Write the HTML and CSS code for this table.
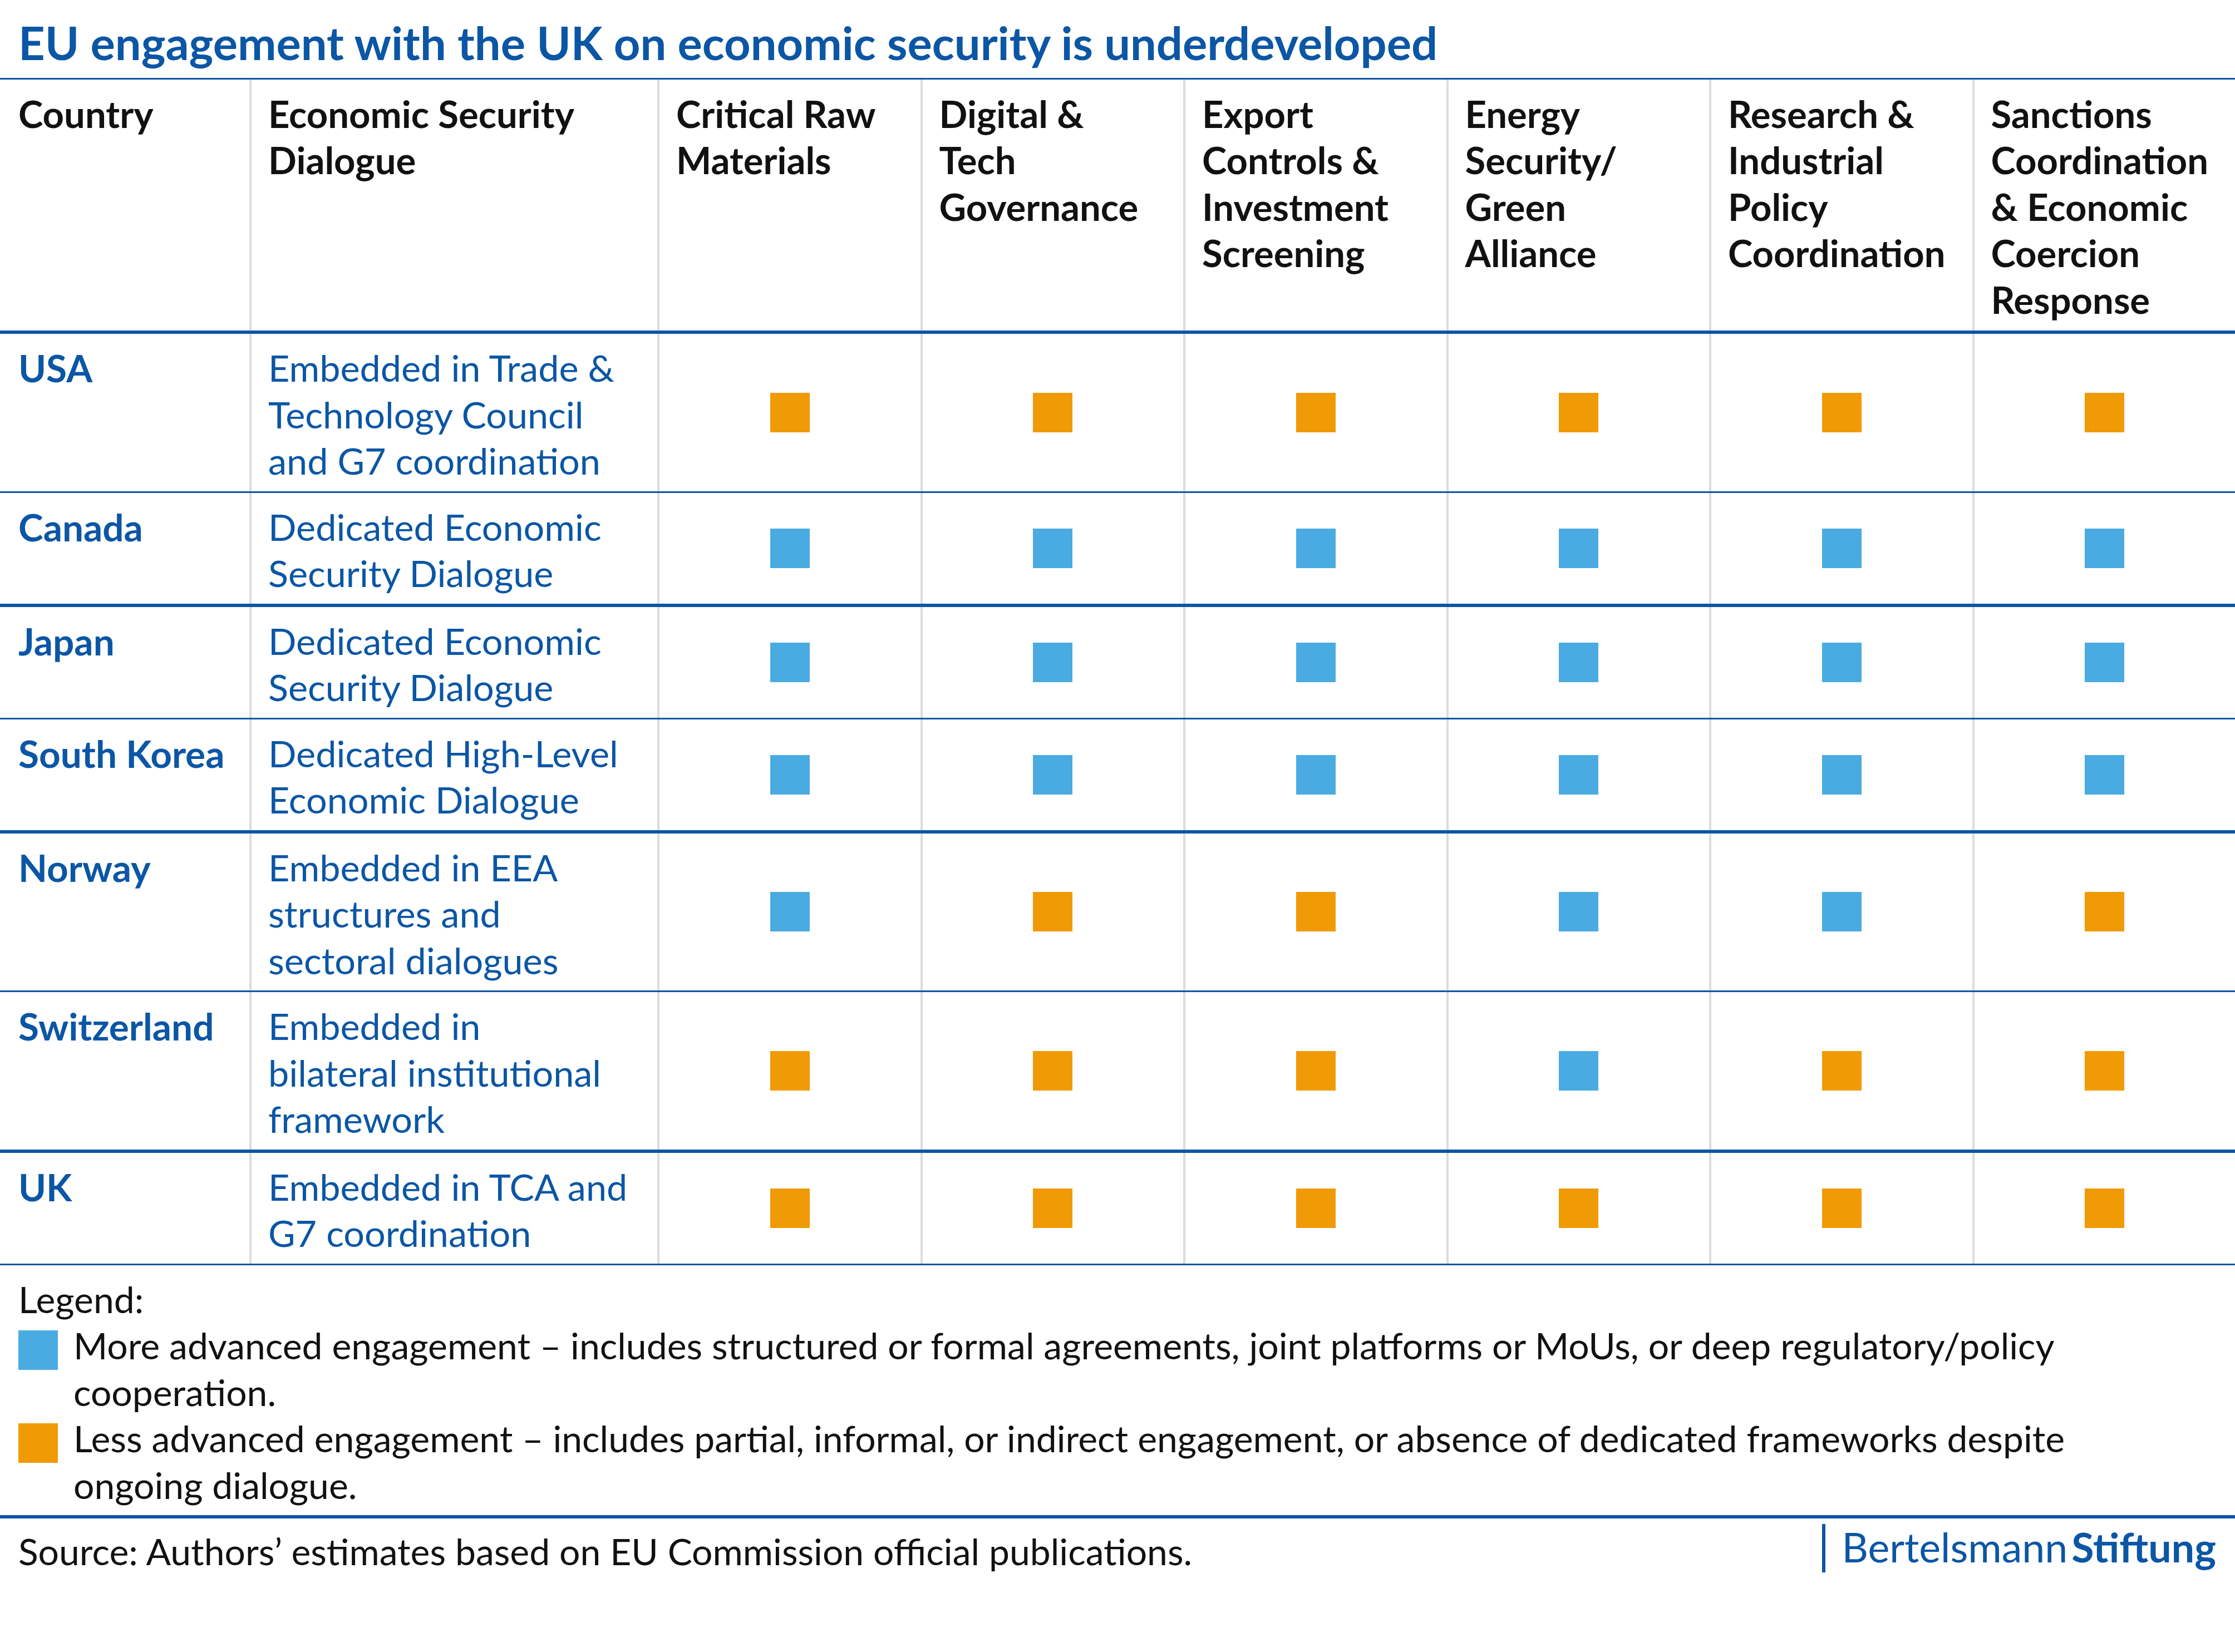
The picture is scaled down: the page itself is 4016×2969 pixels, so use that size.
FILE: index.html
```html
<!DOCTYPE html>
<html lang="en">
<head>
<meta charset="utf-8">
<title>EU engagement with the UK on economic security is underdeveloped</title>
<link rel="stylesheet" href="styles.css">
</head>
<body>
<div class="page">
  <h1 class="title">EU engagement with the UK on economic security is underdeveloped</h1>

  <div class="table">
    <div class="row head thick">
      <div class="cell first">Country</div>
      <div class="cell">Economic Security<br>Dialogue</div>
      <div class="cell">Critical Raw<br>Materials</div>
      <div class="cell">Digital &amp;<br>Tech<br>Governance</div>
      <div class="cell">Export<br>Controls &amp;<br>Investment<br>Screening</div>
      <div class="cell">Energy<br>Security/<br>Green<br>Alliance</div>
      <div class="cell">Research &amp;<br>Industrial<br>Policy<br>Coordination</div>
      <div class="cell">Sanctions<br>Coordination<br>&amp; Economic<br>Coercion<br>Response</div>
    </div>

    <div class="row">
      <div class="cell first country">USA</div>
      <div class="cell dialogue">Embedded in Trade &amp;<br>Technology Council<br>and G7 coordination</div>
      <div class="cell mark"><span class="sq less"></span></div>
      <div class="cell mark"><span class="sq less"></span></div>
      <div class="cell mark"><span class="sq less"></span></div>
      <div class="cell mark"><span class="sq less"></span></div>
      <div class="cell mark"><span class="sq less"></span></div>
      <div class="cell mark"><span class="sq less"></span></div>
    </div>

    <div class="row thick">
      <div class="cell first country">Canada</div>
      <div class="cell dialogue">Dedicated Economic<br>Security Dialogue</div>
      <div class="cell mark"><span class="sq more"></span></div>
      <div class="cell mark"><span class="sq more"></span></div>
      <div class="cell mark"><span class="sq more"></span></div>
      <div class="cell mark"><span class="sq more"></span></div>
      <div class="cell mark"><span class="sq more"></span></div>
      <div class="cell mark"><span class="sq more"></span></div>
    </div>

    <div class="row">
      <div class="cell first country">Japan</div>
      <div class="cell dialogue">Dedicated Economic<br>Security Dialogue</div>
      <div class="cell mark"><span class="sq more"></span></div>
      <div class="cell mark"><span class="sq more"></span></div>
      <div class="cell mark"><span class="sq more"></span></div>
      <div class="cell mark"><span class="sq more"></span></div>
      <div class="cell mark"><span class="sq more"></span></div>
      <div class="cell mark"><span class="sq more"></span></div>
    </div>

    <div class="row thick">
      <div class="cell first country">South Korea</div>
      <div class="cell dialogue">Dedicated High-Level<br>Economic Dialogue</div>
      <div class="cell mark"><span class="sq more"></span></div>
      <div class="cell mark"><span class="sq more"></span></div>
      <div class="cell mark"><span class="sq more"></span></div>
      <div class="cell mark"><span class="sq more"></span></div>
      <div class="cell mark"><span class="sq more"></span></div>
      <div class="cell mark"><span class="sq more"></span></div>
    </div>

    <div class="row">
      <div class="cell first country">Norway</div>
      <div class="cell dialogue">Embedded in EEA<br>structures and<br>sectoral dialogues</div>
      <div class="cell mark"><span class="sq more"></span></div>
      <div class="cell mark"><span class="sq less"></span></div>
      <div class="cell mark"><span class="sq less"></span></div>
      <div class="cell mark"><span class="sq more"></span></div>
      <div class="cell mark"><span class="sq more"></span></div>
      <div class="cell mark"><span class="sq less"></span></div>
    </div>

    <div class="row thick">
      <div class="cell first country">Switzerland</div>
      <div class="cell dialogue">Embedded in<br>bilateral institutional<br>framework</div>
      <div class="cell mark"><span class="sq less"></span></div>
      <div class="cell mark"><span class="sq less"></span></div>
      <div class="cell mark"><span class="sq less"></span></div>
      <div class="cell mark"><span class="sq more"></span></div>
      <div class="cell mark"><span class="sq less"></span></div>
      <div class="cell mark"><span class="sq less"></span></div>
    </div>

    <div class="row">
      <div class="cell first country">UK</div>
      <div class="cell dialogue">Embedded in TCA and<br>G7 coordination</div>
      <div class="cell mark"><span class="sq less"></span></div>
      <div class="cell mark"><span class="sq less"></span></div>
      <div class="cell mark"><span class="sq less"></span></div>
      <div class="cell mark"><span class="sq less"></span></div>
      <div class="cell mark"><span class="sq less"></span></div>
      <div class="cell mark"><span class="sq less"></span></div>
    </div>
  </div>

  <div class="legend">
    <div class="legend-title">Legend:</div>
    <div class="legend-item">
      <span class="sq more"></span>
      <span class="legend-text">More advanced engagement – includes structured or formal agreements, joint platforms or MoUs, or deep regulatory/policy<br>cooperation.</span>
    </div>
    <div class="legend-item">
      <span class="sq less"></span>
      <span class="legend-text">Less advanced engagement – includes partial, informal, or indirect engagement, or absence of dedicated frameworks despite<br>ongoing dialogue.</span>
    </div>
  </div>

  <div class="footer">
    <div class="source">Source: Authors’ estimates based on EU Commission official publications.</div>
    <div class="logo">
      <span class="logo-bar"></span>
      <span class="logo-text">Bertelsmann<span class="logo-bold">Stiftung</span></span>
    </div>
  </div>
</div>
</body>
</html>
```

FILE: styles.css
```css
html, body {
  margin: 0;
  padding: 0;
  background: #ffffff;
}

body {
  font-family: Lato, "Noto Sans", "Liberation Sans", sans-serif;
  color: #111111;
}

.page {
  width: 4016px;
  min-height: 2969px;
}

.title {
  margin: 0;
  padding: 27px 33px 13px 33px;
  font-size: 83px;
  line-height: 1.2;
  font-weight: 700;
  color: #0b56a5;
  border-bottom: 3px solid #0b56a5;
}

.table {
  display: flex;
  flex-direction: column;
}

.row {
  display: grid;
  grid-template-columns: 448px 733px repeat(6, 1fr);
  border-bottom: 3px solid #0b56a5;
  font-size: 66.5px;
  line-height: 83.5px;
}

.row.thick {
  border-bottom-width: 6px;
}

.cell {
  border-left: 4px solid #dcdcdc;
  padding: 19px 10px 13px 30px;
}

.cell.first {
  border-left: none;
  padding-left: 33px;
}

.head .cell {
  padding-top: 20px;
  padding-bottom: 14px;
  font-size: 67px;
  font-weight: 700;
  color: #111111;
}

.country {
  font-size: 67.5px;
  font-weight: 700;
  color: #0b56a5;
}

.dialogue {
  color: #0b56a5;
}

.cell.mark {
  padding: 0;
  display: flex;
  align-items: center;
  justify-content: center;
}

.sq {
  display: block;
  width: 71px;
  height: 71px;
  flex: none;
}

.sq.more {
  background: #4aabe2;
}

.sq.less {
  background: #f09a05;
}

.legend {
  padding: 19px 33px 13px 33px;
  font-size: 66px;
  line-height: 83.5px;
  color: #111111;
}

.legend-item {
  display: flex;
  align-items: flex-start;
}

.legend-item .sq {
  margin-top: 15px;
  margin-right: 28px;
}

.footer {
  border-top: 6px solid #0b56a5;
  padding: 10px 34px 0 33px;
  display: flex;
  justify-content: space-between;
  align-items: flex-start;
}

.source {
  margin-top: 7px;
  font-size: 66px;
  line-height: 83.5px;
  color: #111111;
}

.logo {
  display: flex;
  align-items: flex-start;
  color: #0b56a5;
}

.logo-bar {
  display: block;
  width: 6px;
  height: 87px;
  background: #0b56a5;
  margin-right: 30px;
}

.logo-text {
  margin-top: -3px;
  font-size: 73.5px;
  line-height: 1.2;
  font-weight: 400;
}

.logo-bold {
  font-weight: 700;
  margin-left: 7px;
}
```
